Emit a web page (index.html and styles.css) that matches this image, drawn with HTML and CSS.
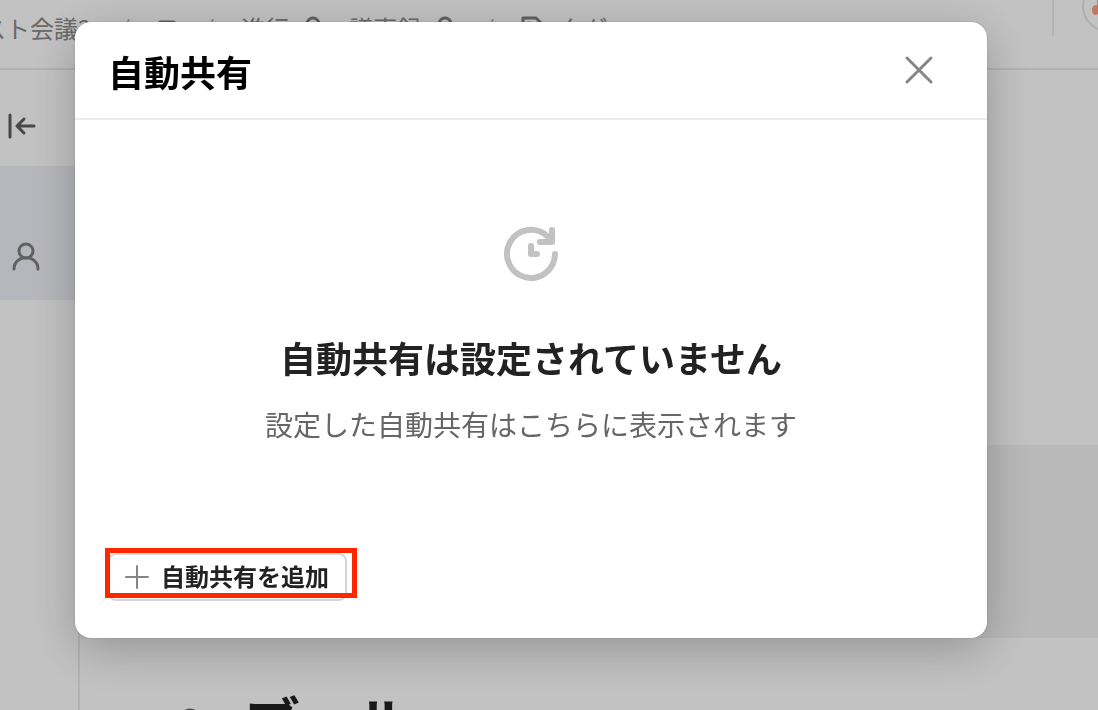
FILE: index.html
```html
<!DOCTYPE html>
<html lang="ja">
<head>
    <meta charset="UTF-8">
    <meta name="viewport" content="width=device-width, initial-scale=1.0">
    <title>自動共有</title>
    <link rel="stylesheet" href="styles.css">
</head>
<body>
    <div class="page">
        <header class="topbar">
            <nav class="crumbs">
                <span class="room">スト会議2</span>
                <span class="slash">/</span>
                <svg class="menu-icon" width="20" height="20" viewBox="0 0 20 20"><path d="M3 4h14M3 10h14M3 16h14"/></svg>
                <span class="slash">/</span>
                <span class="role">進行
                    <svg width="24" height="24" viewBox="0 0 24 24"><circle cx="12" cy="8" r="6"/><path d="M2 23c0-12 20-12 20 0"/></svg>
                </span>
                <span class="role">議事録
                    <svg width="24" height="24" viewBox="0 0 24 24"><circle cx="12" cy="8" r="6"/><path d="M2 23c0-12 20-12 20 0"/></svg>
                </span>
                <span class="slash">/</span>
                <span class="tag">
                    <svg width="26" height="26" viewBox="0 0 26 26"><path d="M2 3h13l9 9-11 12L2 14z"/><circle cx="8" cy="9" r="1"/></svg>
                    タグ
                </span>
            </nav>
            <div class="account">
                <svg width="50" height="54" viewBox="0 0 50 54"><circle class="ring" cx="28" cy="28" r="25"/><path class="mark" d="M12 32q0-5 5-5V10h12v24l-14 3q-3-1-3-5z"/></svg>
            </div>
        </header>
        <div class="columns">
            <aside class="sidebar">
                <svg class="collapse" width="30" height="26" viewBox="0 0 30 26"><path d="M3 2v22M27 13H11M17 6l-7 7 7 7"/></svg>
                <div class="member">
                    <svg width="28" height="30" viewBox="0 0 28 30"><circle cx="14" cy="10" r="7"/><path d="M2 28C2 13 26 13 26 28"/></svg>
                </div>
            </aside>
            <main class="doc">
                <div class="block"></div>
                <h1>
                    <svg width="60" height="24" viewBox="0 0 60 24"><circle cx="30" cy="12" r="10"/></svg>
                    ブール
                </h1>
            </main>
        </div>
    </div>

    <div class="overlay">
        <div class="modal" role="dialog" aria-labelledby="modal-title">
            <div class="modal-head">
                <h2 id="modal-title">自動共有</h2>
                <button class="close" aria-label="閉じる">
                    <svg width="30" height="30" viewBox="0 0 30 30"><path d="M3 3l24 24M27 3L3 27"/></svg>
                </button>
            </div>
            <div class="empty">
                <svg width="56" height="58" viewBox="0 0 56 58"><path d="M52 31A24 24 0 1 1 44 13M37 19h12V7M28 23v8h6"/></svg>
                <h3>自動共有は設定されていません</h3>
                <p>設定した自動共有はこちらに表示されます</p>
            </div>
            <div class="modal-foot">
                <button class="add">
                    <svg width="24" height="24" viewBox="0 0 24 24"><path d="M12 1v22M1 12h22"/></svg>
                    <span>自動共有を追加</span>
                </button>
            </div>
        </div>
    </div>
</body>
</html>
```
FILE: styles.css
```css
*{
    box-sizing: border-box;
}
body{
    margin: 0;
    background-color: #fff;
    color: #222;
    font-family: "Noto Sans CJK JP", "Noto Sans", sans-serif;
}
h1,h2,h3,p{
    margin: 0;
}
svg{
    display: block;
    flex: none;
    fill: none;
    stroke: currentColor;
    stroke-width: 3;
    stroke-linecap: round;
    stroke-linejoin: round;
}
button{
    font-family: inherit;
    background-color: #fff;
    cursor: pointer;
}

/* page behind the dialog */
.page{
    display: flex;
    flex-direction: column;
    height: 100vh;
    overflow: hidden;
}
.topbar{
    display: flex;
    justify-content: space-between;
    flex: none;
    height: 70px;
    border-bottom: 2px solid #ebebeb;
    overflow: hidden;
}
.crumbs{
    display: flex;
    align-items: center;
    height: 56px;
    margin-left: -18px;
    color: #8a8a8a;
    font-size: 24px;
    line-height: 36px;
    white-space: nowrap;
}
.room{
    padding-right: 2px;
}
.slash{
    width: 64px;
    color: #b0b0b0;
    text-align: center;
}
.menu-icon{
    color: #808080;
}
.role,.tag{
    display: flex;
    align-items: center;
    gap: 12px;
}
.role + .role{
    margin-left: 24px;
}
.role svg,.tag svg{
    color: #808080;
}
.account{
    flex: none;
    width: 46px;
    height: 36px;
    border-left: 2px solid #ebebeb;
    padding-left: 26px;
}
.account svg{
    margin-top: -22px;
}
.account .ring{
    stroke: #e6e6e6;
    stroke-width: 2;
}
.account .mark{
    fill: #ff9d82;
    stroke: none;
}
.columns{
    display: flex;
    flex: 1;
    min-height: 0;
}
.sidebar{
    flex: none;
    width: 80px;
    border-right: 2px solid #ebebeb;
}
.collapse{
    margin: 43px 0 27px 7px;
    color: #5f5f5f;
}
.member{
    display: flex;
    align-items: flex-end;
    height: 134px;
    padding: 0 0 29px 12px;
    background-color: #f0f1f7;
    color: #808080;
}
.doc{
    flex: 1;
    padding-top: 375px;
}
.block{
    height: 193px;
    background-color: #f3f3f3;
}
.doc h1{
    display: flex;
    align-items: center;
    gap: 24px;
    padding: 40px 0 0 80px;
    font-size: 56px;
    line-height: 84px;
}
.doc h1 svg{
    color: #666;
}

/* dialog */
.overlay{
    position: fixed;
    inset: 0;
    padding: 22px 111px 72px 75px;
    background-color: rgba(0,0,0,0.24);
}
.modal{
    display: flex;
    flex-direction: column;
    height: 100%;
    border-radius: 16px;
    background-color: #fff;
    box-shadow: 0 0 2px rgba(0,0,0,0.2), 0 12px 48px rgba(0,0,0,0.24);
}
.modal-head{
    display: flex;
    justify-content: space-between;
    align-items: center;
    height: 98px;
    padding: 0 53px 0 33px;
    border-bottom: 2px solid #ebebeb;
}
.modal-head h2{
    padding-top: 2px;
    color: #000;
    font-size: 36px;
    line-height: 52px;
}
.close{
    padding: 0;
    border: none;
    color: #868686;
}
.empty{
    display: flex;
    flex-direction: column;
    flex: 1;
    align-items: center;
    padding-top: 103px;
    text-align: center;
}
.empty svg{
    color: #c2c2c2;
    stroke-width: 6;
}
.empty h3{
    margin-top: 50px;
    font-size: 36px;
    line-height: 52px;
}
.empty p{
    margin-top: 21px;
    color: #666;
    font-size: 28px;
    line-height: 40px;
}
.modal-foot{
    padding: 0 33px 37px;
}
.add{
    display: flex;
    align-items: center;
    gap: 12px;
    position: relative;
    height: 48px;
    padding: 0 16px 0 15px;
    border: 2px solid #d6d6d6;
    border-radius: 8px;
    color: #222;
    font-size: 24px;
    font-weight: 700;
}
.add span{
    padding-bottom: 4px;
}
.add svg{
    color: #868686;
    stroke-width: 2;
}
/* highlight frame over the button */
.add::after{
    content: "";
    position: absolute;
    inset: -7px -12px 1px -5px;
    border: 5px solid #ff2600;
}
```
